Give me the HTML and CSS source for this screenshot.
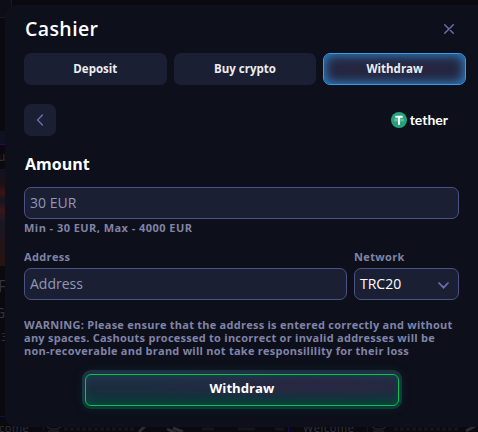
FILE: index.html
```html
<!DOCTYPE html>
<html lang="en">
<head>
    <meta charset="UTF-8">
    <meta name="viewport" content="width=device-width, initial-scale=1.0">
    <title>Cashier</title>
    <link rel="stylesheet" href="styles.css">
</head>
<body>
    <!-- dimmed lobby behind the cashier -->
    <div class="lobby" aria-hidden="true">
        <div class="lobby-bar"></div>
        <div class="lobby-tab"></div>
        <span class="lobby-text t-u">u</span>
        <div class="lobby-game"></div>
        <span class="lobby-text t-f">Fi</span>
        <span class="lobby-text t-g">G</span>
        <span class="lobby-text t-n">3</span>
        <div class="lobby-card card-left"></div>
        <div class="lobby-card card-mid"></div>
        <span class="lobby-text t-come">come</span>
        <span class="lobby-text t-welcome">Welcome</span>
        <svg class="lobby-art" width="478" height="7" viewBox="0 0 478 7" fill="none">
            <path d="M47 1l4 2h6l4-2M48 5h11M372 1l4 2h6l4-2M373 5h11" stroke="#2b2b32"/>
            <path d="M64 3h72M394 3h66" stroke="#14141b" stroke-width="3" stroke-dasharray="4 2"/>
            <path d="M139 6l6-6M167 3l9 4M173 2l10 4M466 5l9-5" stroke="#2c2c33" stroke-width="3"/>
            <path d="M202 3h12M238 3h17M275 3h9" stroke="#15151c" stroke-width="3"/>
        </svg>
    </div>

    <div class="cashier">
        <div class="cashier-header">
            <h1>Cashier</h1>
            <button class="close-btn" aria-label="Close">
                <svg width="10" height="10" viewBox="0 0 10 10"><path d="M.7.7l8.6 8.6M9.3.7L.7 9.3"/></svg>
            </button>
        </div>

        <div class="tabs">
            <button>Deposit</button>
            <button>Buy crypto</button>
            <button class="active">Withdraw</button>
        </div>

        <div class="method">
            <button class="back-btn" aria-label="Back">
                <svg width="8" height="12" viewBox="0 0 8 12"><path d="M6.4 1L1.6 6l4.8 5"/></svg>
            </button>
            <div class="tether">
                <svg width="16" height="16" viewBox="0 0 16 16">
                    <circle cx="8" cy="8" r="8" fill="#26a17b"/>
                    <path d="M4.3 4.8h7.4M8 4.8v8" stroke="#fff" stroke-width="2" fill="none"/>
                    <ellipse cx="8" cy="8" rx="4.7" ry="1" stroke="#bce2d5" stroke-width=".6" fill="none"/>
                </svg>
                <span>tether</span>
            </div>
        </div>

        <form class="withdraw-form" onsubmit="event.preventDefault()">
            <h2>Amount</h2>
            <input type="text" id="amount" placeholder="30 EUR">
            <p class="limits">Min - 30 EUR, Max - 4000 EUR</p>

            <div class="row">
                <div class="field address">
                    <label for="address">Address</label>
                    <input type="text" id="address" placeholder="Address">
                </div>
                <div class="field network">
                    <label for="network">Network</label>
                    <div class="select" id="network">
                        <span>TRC20</span>
                        <svg width="11" height="7" viewBox="0 0 11 7"><path d="M1 1l4.5 4.7L10 1"/></svg>
                    </div>
                </div>
            </div>

            <p class="warning">WARNING: Please ensure that the address is entered correctly and without<br>
            any spaces. Cashouts processed to incorrect or invalid addresses will be<br>
            non-recoverable and brand will not take responsilility for their loss</p>

            <button type="submit" class="submit-btn"><span>Withdraw</span></button>
        </form>
    </div>
</body>
</html>
```
FILE: styles.css
```css
* {
    box-sizing: border-box;
}
body {
    margin: 0;
    height: 432px;
    padding: 5px 0 0 5px;
    overflow: hidden;
    background: #09090f;
    font-family: "Open Sans", "Noto Sans", sans-serif;
    color: #fff;
}
h1, h2, p {
    margin: 0;
}
button {
    padding: 0;
    border: none;
    font-family: inherit;
    color: #fff;
    cursor: pointer;
}
svg {
    display: block;
}

/* lobby */
.lobby {
    position: absolute;
    inset: 0;
    overflow: hidden;
}
.lobby > * {
    position: absolute;
}
.lobby-bar {
    left: 0;
    top: 0;
    width: 12px;
    height: 18px;
    background: #0d0d17;
    border-right: 1px solid #1a1a27;
    border-bottom: 1px solid #1a1a27;
}
.lobby-tab {
    left: 0;
    top: 131px;
    width: 6px;
    height: 14px;
    background: #0e1122;
    border-bottom: 1px solid #2b0b43;
}
.lobby-game {
    left: 0;
    top: 169px;
    width: 6px;
    height: 97px;
    background: linear-gradient(#11131c, #1c1018 15%, #3d1415 24%, #13151f 31%, #3b1518 42%, #171825 55%, #211518 75%, #26140e);
    border-top: 1px solid #1d0b2d;
}
.lobby-text {
    font-size: 12px;
    line-height: 14px;
    color: #34343c;
}
.t-u { left: -2px; top: 150px; }
.t-f { left: -2px; top: 279px; font-size: 16px; }
.t-g { left: -5px; top: 306px; font-size: 14px; }
.t-n { left: 1px; top: 330px; font-size: 11px; }
.t-come { left: -1px; top: 421px; font-size: 11px; letter-spacing: 0.5px; }
.t-welcome { left: 303px; top: 421px; font-size: 11px; letter-spacing: 0.6px; }
.lobby-card {
    top: 416px;
    height: 20px;
    border: 1px solid #160e4b;
    border-radius: 6px;
}
.card-left {
    left: -10px;
    width: 54px;
}
.card-mid {
    left: 288px;
    width: 80px;
}
.lobby-art {
    left: 0;
    top: 426px;
}

/* cashier */
.cashier {
    position: relative;
    height: 422px;
    padding: 13px 12px 0 19px;
    background: #0d0f1b;
    border-radius: 12px 0 0 12px;
}
.cashier-header {
    display: flex;
    justify-content: space-between;
    align-items: center;
    height: 22px;
    margin-bottom: 13px;
}
h1 {
    padding-left: 1px;
    font-size: 19.5px;
    font-weight: 600;
    line-height: 22px;
    letter-spacing: 0.4px;
}
.close-btn {
    margin-right: 12px;
    background: none;
}
.close-btn svg, .back-btn svg, .select svg {
    fill: none;
    stroke: #6970ab;
    stroke-width: 1.4;
    stroke-linecap: round;
}
.tabs {
    display: grid;
    grid-template-columns: repeat(3, 1fr);
    gap: 7px;
    margin-bottom: 19px;
}
.tabs button {
    height: 32px;
    padding-bottom: 2px;
    border-radius: 7px;
    background: #1b1f34;
    font-size: 11.5px;
    font-weight: 700;
    color: #ecedf1;
}
.tabs .active {
    border: 1px solid #369bed;
    background: #25263f;
    box-shadow: inset 0 0 11px 1px #3089d2;
}
.method {
    display: flex;
    justify-content: space-between;
    align-items: center;
    padding-right: 18px;
    margin-bottom: 17px;
}
.back-btn {
    display: flex;
    justify-content: center;
    align-items: center;
    width: 32px;
    height: 32px;
    border-radius: 7px;
    background: #1b1f34;
}
.tether {
    display: flex;
    align-items: center;
    gap: 3px;
    font-family: Lato, sans-serif;
    font-size: 14px;
    font-weight: 700;
    line-height: 16px;
}

/* form */
.withdraw-form {
    padding-right: 7px;
}
h2 {
    padding-left: 1px;
    font-size: 16px;
    font-weight: 700;
    line-height: 22px;
    margin-bottom: 12px;
}
input, .select {
    display: block;
    width: 100%;
    height: 32px;
    padding: 0 5px 1px;
    border: 1px solid #4c5283;
    border-radius: 7px;
    background: #1b1f34;
    font-family: inherit;
    font-size: 14px;
    color: #fff;
    outline: none;
}
input::placeholder {
    color: #9297b7;
    opacity: 1;
}
.limits, label, .warning {
    font-size: 11px;
    font-weight: 700;
    color: #8084a6;
}
.limits {
    line-height: 14px;
    margin: 2px 0 15px;
    letter-spacing: 0.45px;
}
.row {
    display: flex;
    gap: 7px;
}
.address {
    flex: 1;
}
.network {
    width: 105px;
}
label {
    display: block;
    line-height: 14px;
    margin-bottom: 4px;
    letter-spacing: 0.35px;
}
.select {
    display: flex;
    justify-content: space-between;
    align-items: center;
    padding-right: 9px;
}
.select svg {
    margin-top: 3px;
    stroke-width: 1.7;
}
.warning {
    margin-top: 18px;
    line-height: 13px;
    letter-spacing: 0.25px;
    white-space: nowrap;
}
.submit-btn {
    display: block;
    width: 320px;
    height: 39px;
    margin: 13px auto 0 58px;
    padding: 4px 3px 3px;
    border-radius: 9px;
    background: linear-gradient(#1e3041, #143b40 60%, #073b34);
    box-shadow: 0 0 8px rgba(16, 82, 70, 0.25);
}
.submit-btn span {
    display: block;
    height: 32px;
    border: 1px solid #0abf51;
    border-radius: 6px;
    background: radial-gradient(ellipse at 75% 35%, rgba(43, 38, 67, 0.9), transparent 55%), linear-gradient(#22314a, #1b2c3f 45%, #0a3b39);
    box-shadow: inset 0 0 8px rgba(15, 88, 70, 0.5);
    font-size: 13.2px;
    font-weight: 700;
    line-height: 27px;
}
```
